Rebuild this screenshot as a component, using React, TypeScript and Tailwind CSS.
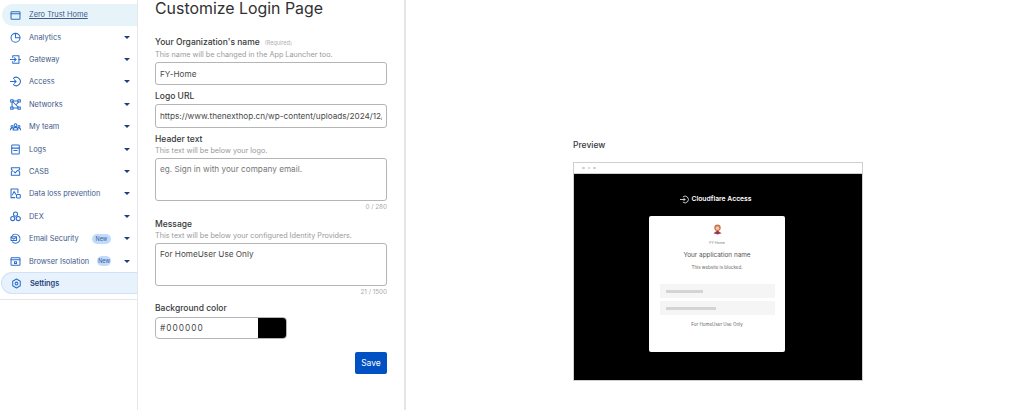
import type { ReactNode } from 'react';

const stroke = {
  fill: 'none',
  stroke: 'currentColor',
  strokeWidth: 1.5,
  strokeLinecap: 'round' as const,
  strokeLinejoin: 'round' as const,
};

function Ico({ children }: { children: ReactNode }) {
  return (
    <svg viewBox="0 0 16 16" className="w-[11px] h-[11px] text-[#2c6ecb] shrink-0" {...stroke}>
      {children}
    </svg>
  );
}

const navItems: { label: string; icon: ReactNode; isNew?: boolean }[] = [
  {
    label: 'Analytics',
    icon: (
      <Ico>
        <circle cx="8" cy="8.5" r="6.500" />
        <path d="M8 2v6.500h6.500" />
      </Ico>
    ),
  },
  {
    label: 'Gateway',
    icon: (
      <Ico>
        <path d="M4 5V2.500h9v11H4V11" />
        <path d="M0.500 8H9M6.500 5.500 9 8l-2.500 2.500M13 8h2.500" />
      </Ico>
    ),
  },
  {
    label: 'Access',
    icon: (
      <Ico>
        <path d="M5 3.500a6 6 0 1 1 0 9" />
        <path d="M0.500 8H9M6.500 5.500 9 8l-2.500 2.500" />
      </Ico>
    ),
  },
  {
    label: 'Networks',
    icon: (
      <Ico>
        <rect x="1" y="1" width="3.500" height="3.500" />
        <rect x="11.500" y="1" width="3.500" height="3.500" />
        <rect x="1" y="11.500" width="3.500" height="3.500" />
        <rect x="11.500" y="11.500" width="3.500" height="3.500" />
        <path d="M4.500 3h7M3 4.500v7M4.500 13h7M4 4l8 8M12.500 4.500 9 8" />
      </Ico>
    ),
  },
  {
    label: 'My team',
    icon: (
      <Ico>
        <circle cx="8" cy="6" r="2" />
        <circle cx="3" cy="8" r="1.500" />
        <circle cx="13" cy="8" r="1.500" />
        <path d="M4.500 13c0-5 7-5 7 0zM0.500 13c0-2 1-2.500 2.500-2.500M15.500 13c0-2-1-2.500-2.500-2.500" />
      </Ico>
    ),
  },
  {
    label: 'Logs',
    icon: (
      <Ico>
        <rect x="2.500" y="1.500" width="11" height="13" rx="1" />
        <path d="M2.500 6h11M5.500 9.500h5" />
      </Ico>
    ),
  },
  {
    label: 'CASB',
    icon: (
      <Ico>
        <path d="M2 5V2.500h12V5a1.800 1.800 0 0 0 0 3.500v5H2v-5A1.800 1.800 0 0 0 2 5z" />
        <path d="m5.500 8 2 2 3.500-3.500" />
      </Ico>
    ),
  },
  {
    label: 'Data loss prevention',
    icon: (
      <Ico>
        <path d="M7 14H1.500V1.500h10V7" />
        <path d="M3.500 10l2.500-5 2.500 4" />
        <rect x="9.500" y="9.500" width="5.500" height="5" rx="1" />
      </Ico>
    ),
  },
  {
    label: 'DEX',
    icon: (
      <Ico>
        <circle cx="8" cy="4.500" r="3" />
        <circle cx="4" cy="11" r="3" />
        <circle cx="12" cy="11" r="3" />
      </Ico>
    ),
  },
  {
    label: 'Email Security',
    isNew: true,
    icon: (
      <Ico>
        <path d="M3.500 3.500a6.500 6.500 0 1 1 0 9.500" />
        <rect x="1.500" y="5.500" width="8" height="5.500" rx="0.500" />
        <path d="m1.500 6 4 3 4-3" />
      </Ico>
    ),
  },
  {
    label: 'Browser Isolation',
    isNew: true,
    icon: (
      <Ico>
        <rect x="1.500" y="2.500" width="13" height="11" rx="1" />
        <path d="M1.500 5.500h13" />
        <rect x="6.500" y="8.500" width="3" height="2.500" />
      </Ico>
    ),
  },
];

function Caret() {
  return <span className="w-0 h-0 border-x-[3px] border-x-transparent border-t-[3px] border-t-[#1d3f7a]" />;
}

function Sidebar() {
  return (
    <aside className="w-[138px] shrink-0 h-full border-r border-[#e5e7eb] pt-[4px] font-['Inter',sans-serif] text-[7.400px] text-[#41598a] overflow-hidden">
      <div className="h-[22px] ml-[2px] pl-[8px] flex items-center gap-[8px] bg-[#e6f4f9] rounded-l-[11px]">
        <Ico>
          <rect x="1.500" y="2.500" width="13" height="11" rx="1" />
          <path d="M1.500 5.500h13" />
        </Ico>
        <span className="underline">Zero Trust Home</span>
      </div>
      <div className="flex flex-col">
        {navItems.map((item) => (
          <div key={item.label} className="h-[22.400px] pl-[10px] pr-[7px] flex items-center gap-[8px]">
            {item.icon}
            <span className="flex-1 whitespace-nowrap">{item.label}</span>
            {item.isNew && (
              <span className="mr-[5px] w-[19px] h-[10px] rounded-full bg-[#bfdbfe] text-[5.500px] leading-[10px] text-center">
                New
              </span>
            )}
            <Caret />
          </div>
        ))}
      </div>
      <div className="h-[22px] ml-[1px] pl-[9px] flex items-center gap-[8px] bg-[#e8f2fd] border border-r-0 border-[#cfe2fa] rounded-l-[11px] font-semibold text-[#1d3f7a]">
        <Ico>
          <circle cx="8" cy="8" r="2" />
          <path d="M8 1.500 13.500 4.700v6.600L8 14.500l-5.500-3.200V4.700z" />
        </Ico>
        <span>Settings</span>
      </div>
      <div className="mt-[5px] h-px bg-[#e5e7eb]" />
    </aside>
  );
}

function Label({ children, hint }: { children: ReactNode; hint?: string }) {
  return (
    <div className="text-[8.500px] leading-[12px] font-medium text-[#36393a]">
      {children}
      {hint && <span className="ml-[5px] text-[5.500px] leading-none font-normal text-[#b0b0b0]">{hint}</span>}
    </div>
  );
}

function Help({ children }: { children: ReactNode }) {
  return <div className="text-[7.250px] leading-[11px] text-[#9a9a9a]">{children}</div>;
}

function Counter({ children }: { children: ReactNode }) {
  return <div className="text-right text-[6.300px] leading-[9px] text-[#a8a8a8]">{children}</div>;
}

const box = 'block w-full border border-[#b5b5b5] rounded-[3px] px-[4px] text-[8.200px] text-[#4a4a4a] placeholder:text-[#777] bg-white outline-none';

function FormPanel() {
  return (
    <section className="w-[268px] shrink-0 h-full border-r-2 border-[#e5e5e5] pl-[17px] pr-[17px] font-['Inter',sans-serif] overflow-hidden">
      <h1 className="text-[15.900px] leading-[18px] text-[#313131] font-normal">Customize Login Page</h1>

      <div className="mt-[18px]">
        <Label hint="(Required)">Your Organization's name</Label>
      </div>
      <div className="mt-[1px]">
        <Help>This name will be changed in the App Launcher too.</Help>
      </div>
      <input readOnly defaultValue="FY-Home" className={`mt-[2px] h-[23px] ${box}`} />

      <div className="mt-[5px]">
        <Label>Logo URL</Label>
      </div>
      <input
        readOnly
        defaultValue="https://www.thenexthop.cn/wp-content/uploads/2024/12/c"
        className={`mt-[2px] h-[24px] ${box}`}
      />

      <div className="mt-[5px]">
        <Label>Header text</Label>
      </div>
      <Help>This text will be below your logo.</Help>
      <textarea
        readOnly
        placeholder="eg. Sign in with your company email."
        className={`mt-[2px] h-[43px] pt-[5px] leading-[11px] resize-none ${box}`}
      />
      <div className="mt-[2px]">
        <Counter>0 / 280</Counter>
      </div>

      <div className="mt-[6px]">
        <Label>Message</Label>
      </div>
      <Help>This text will be below your configured Identity Providers.</Help>
      <textarea
        readOnly
        defaultValue="For HomeUser Use Only"
        className={`mt-[2px] h-[43px] pt-[5px] leading-[11px] resize-none ${box}`}
      />
      <div className="mt-[2px]">
        <Counter>21 / 1500</Counter>
      </div>

      <div className="mt-[5px]">
        <Label>Background color</Label>
      </div>
      <div className="mt-[3px] w-[132px] h-[22px] flex border border-[#b5b5b5] rounded-[4px] overflow-hidden">
        <div className="flex-1 flex items-center pl-[4px] text-[8.300px] tracking-[1px] text-[#4a4a4a]">#000000</div>
        <div className="w-[28px] bg-black" />
      </div>

      <div className="mt-[13px] flex justify-end">
        <button className="w-[32px] h-[22px] rounded-[2px] bg-[#0051c3] text-white text-[8.500px]">Save</button>
      </div>
    </section>
  );
}

function Preview() {
  return (
    <section className="flex-1 pl-[167px] pt-[139px] font-['Inter',sans-serif]">
      <div className="text-[8.500px] leading-[12px] font-medium text-[#36393a]">Preview</div>
      <div className="mt-[11px] w-[290px] h-[219px] flex flex-col border border-[#cfcfcf]">
        <div className="h-[11px] shrink-0 flex items-center gap-[3px] pl-[8px] bg-white border-b border-[#cfcfcf]">
          <span className="w-[2.500px] h-[2.500px] rounded-full bg-[#cccccc]" />
          <span className="w-[2.500px] h-[2.500px] rounded-full bg-[#cccccc]" />
          <span className="w-[2.500px] h-[2.500px] rounded-full bg-[#cccccc]" />
        </div>
        <div className="flex-1 bg-black flex flex-col items-center pt-[19px]">
          <div className="h-[12px] mr-[4px] flex items-center gap-[2px] text-white text-[6.800px] font-semibold">
            <svg viewBox="0 0 16 16" className="w-[9px] h-[9px]" fill="none" stroke="white" strokeWidth="1.400">
              <path d="M5 3.500a6 6 0 1 1 0 9" />
              <path d="M0 8h9M6.500 5.500 9 8l-2.500 2.500" />
            </svg>
            Cloudflare Access
          </div>
          <div className="mt-[11px] mr-[2px] w-[136px] h-[136px] bg-white rounded-[2px] flex flex-col items-center pt-[8px]">
            <svg viewBox="0 0 12 12" className="w-[11px] h-[11px]">
              <circle cx="6" cy="4" r="3.500" fill="#c9744a" />
              <circle cx="6" cy="4.500" r="2" fill="#f2c9a8" />
              <path d="M1.500 10 6 7l4.500 3-4.500 1.500z" fill="#c0343f" />
              <path d="M4.500 8.500h3L6 11z" fill="#2c4c9c" />
            </svg>
            <div className="mt-[6px] text-[3.500px] leading-[5px] text-[#777]">FY-Home</div>
            <div className="mt-[4px] text-[6.400px] leading-[10px] text-[#555]">Your application name</div>
            <div className="mt-[4px] text-[4.500px] leading-[7px] text-[#666]">This website is blocked.</div>
            <div className="mt-[13px] w-[115px] h-[14px] bg-[#f5f5f5] rounded-[1px] flex items-center pl-[6px]">
              <div className="w-[37px] h-[3px] bg-[#d4d4d4]" />
            </div>
            <div className="mt-[3px] w-[115px] h-[14px] bg-[#f5f5f5] rounded-[1px] flex items-center pl-[6px]">
              <div className="w-[50px] h-[3px] bg-[#d4d4d4]" />
            </div>
            <div className="mt-[6px] text-[4.500px] leading-[7px] text-[#666]">For HomeUser Use Only</div>
          </div>
        </div>
      </div>
    </section>
  );
}

export default function App() {
  return (
    <div className="w-[1024px] h-[410px] flex bg-white overflow-hidden">
      <Sidebar />
      <FormPanel />
      <Preview />
    </div>
  );
}
